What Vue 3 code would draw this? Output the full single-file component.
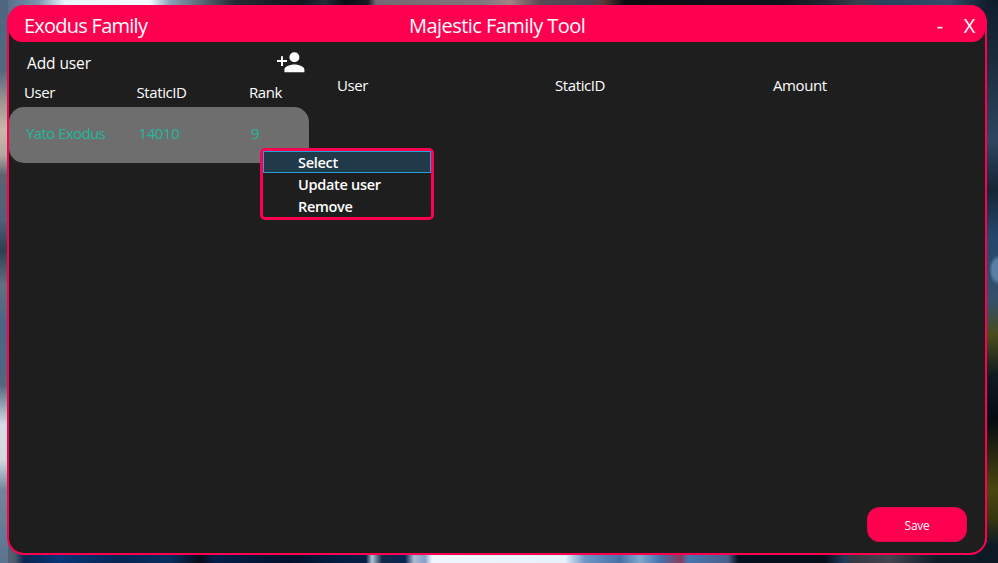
<script setup>
const members = [{ name: 'Yato Exodus', id: '14010', rank: '9' }]
const actions = ['Select', 'Update user', 'Remove']
</script>

<template>
  <div class="desktop">
    <div class="strip top"></div>
    <div class="middle">
      <div class="strip left"></div>
      <main class="window">
        <header class="titlebar">
          <span class="family">Exodus Family</span>
          <h1>Majestic Family Tool</h1>
          <div class="controls"><button class="min">-</button><button class="close">X</button></div>
        </header>
        <div class="content">
          <section class="members">
            <div class="add">
              <span class="addlabel">Add user</span>
              <svg class="addicon" viewBox="0 0 28 21" width="28" height="21">
                <path fill="#fff" d="M17.400 10.200a5 5 0 1 0 0-10a5 5 0 0 0 0 10zM7.400 20.200v-2.600c0-3.400 6.600-5.100 10-5.100s10 1.700 10 5.100v2.600zM4 4.300h2v3.700h4v2H6v3.900H4V10H0V8h4z" />
              </svg>
            </div>
            <div class="cols head"><span>User</span><span>StaticID</span><span>Rank</span></div>
            <div v-for="m in members" :key="m.id" class="cols card">
              <span class="name">{{ m.name }}</span><span>{{ m.id }}</span><span>{{ m.rank }}</span>
            </div>
          </section>
          <section class="amounts">
            <div class="acols"><span>User</span><span>StaticID</span><span>Amount</span></div>
            <button class="save">Save</button>
          </section>
        </div>
      </main>
      <div class="strip right"></div>
    </div>
    <div class="strip bottom"></div>
    <ul class="menu">
      <li v-for="(a, i) in actions" :key="a" :class="{ active: i === 0 }">{{ a }}</li>
    </ul>
  </div>
</template>

<style>
body { overflow: hidden; background: #1b2939; }
</style>

<style scoped>
* { box-sizing: border-box; }
.desktop {
  position: relative; width: 998px; height: 563px; display: flex; flex-direction: column;
  font-family: "Open Sans", "Noto Sans", sans-serif; color: #fff; font-size: 15px; letter-spacing: -.4px;
  background:
    radial-gradient(ellipse 9px 15px at 998px 270px, #5b7ea4 65%, transparent),
    linear-gradient(#101e2c 0, #1a2b3c 60px, #2e465f 140px, #152535 190px, #24466c 235px, #33506b 300px, #4a4b1c 335px, #101b20 375px, #050b10 420px, #4b4610 490px, #35350f 520px, #0c1a25 545px) 987px 0 / 11px 563px no-repeat,
    linear-gradient(#50657f 0, #526780 70px, #9b928f 100px, #cbb7aa 130px, #b5a8a2 155px, #5c6370 175px, #526078 220px, #2e3f52 250px, #627080 285px, #4b6484 325px, #52677f 385px, #d5dde6 425px, #d0d8e0 460px, #72859b 490px, #5a7390 563px) 0 0 / 8px 563px no-repeat,
    linear-gradient(90deg, #50657f 0, #7895ad 38px, #e9f6fc 65px, #f4fcff 150px, #87a2b6 170px, #52616e 205px, #242a33 235px, #12161e 300px, #242d39 325px, #0c0e13 345px, #171b23 368px, #756973 376px, #83757e 485px, #a48282 510px, #594a54 540px, #454654 590px, #5b3a39 603px, #0c0d11 625px, #11131a 780px, #20262f 825px, #37434e 860px, #27445e 885px, #314d69 950px, #101e2c 987px) 0 0 / 998px 20px no-repeat,
    linear-gradient(90deg, #5d6b7b 0, #4b5969 15px, #092653 24px, #083678 60px, #072653 120px, #092f62 170px, #090d17 200px, #04204a 215px, #02122b 290px, #031f42 340px, #071f43 366px, #b1c4d7 372px, #132b48 382px, #082452 405px, #acbbd0 414px, #85a0c9 425px, #f0f6fb 432px, #e7f1fa 565px, #6e96c5 585px, #4772a8 620px, #82a8ce 640px, #4373ae 660px, #873d5c 681px, #4777b0 688px, #4b608d 728px, #06121f 738px, #07101b 825px, #213e5d 845px, #353741 852px, #44454f 890px, #111e29 935px, #0b1922 998px) 0 543px / 998px 20px no-repeat,
    #34485c;
}
.top { height: 5px; flex: none; }
.middle { display: flex; height: 550px; }
.left { width: 7px; flex: none; }
.right { width: 11px; flex: none; }
.window {
  width: 980px; height: 550px; border: 2px solid #ff0051; border-top-width: 0;
  border-radius: 17px; background: linear-gradient(#ff0051 18px, #1e1e1e 18px); overflow: hidden;
  display: flex; flex-direction: column;
}
.titlebar {
  height: 37px; flex: none; background: #ff0051; border-radius: 0 0 13px 13px;
  display: grid; grid-template-columns: 385px auto 1fr; align-items: center;
  padding: 5px 9px 0 15px; font-size: 20px; line-height: 30px;
}
.family { letter-spacing: -.75px; }
h1 { margin: 0; font: inherit; letter-spacing: -.55px; white-space: nowrap; }
.controls { display: flex; justify-content: flex-end; align-items: center; gap: 21px; }
.close { margin-right: 1px; }
button { font: inherit; color: inherit; letter-spacing: inherit; border: 0; background: none; padding: 0; }
.content { display: flex; flex: 1; }
.members { width: 300px; }
.add { display: flex; justify-content: space-between; padding: 10px 4px 0 18px; height: 38px; }
.addlabel { font-size: 15.500px; line-height: 23px; letter-spacing: -.1px; }
.head { height: 27px; padding: 0 0 0 15px; line-height: 25px; }
.cols { display: grid; grid-template-columns: 112.500px 112.500px 1fr; }
.card { height: 56px; padding: 0 0 5px 17px; border-radius: 15px; background: #6e6e6e; color: #22b99a; align-items: center; }
.name { letter-spacing: -.6px; }
.amounts { flex: 1; display: flex; flex-direction: column; justify-content: space-between; padding: 32px 18px 11px 28px; }
.acols { display: grid; grid-template-columns: 218px 218px 1fr; line-height: 22px; }
.save {
  align-self: flex-end; width: 100px; height: 35px; border-radius: 12px; background: #ff0051;
  border: 1px solid #db0b4b; padding-top: 2px; font-size: 12px; letter-spacing: -.3px;
}
.menu {
  position: absolute; left: 260px; top: 148px; width: 174px; height: 72px; margin: 0; padding: 0;
  list-style: none; border: 3px solid #ff0051; border-radius: 5px; background: #1e1e1e;
  font-weight: 600; font-size: 14.500px; letter-spacing: -.3px;
}
.menu li { height: 22px; padding-left: 34px; border: 1px solid transparent; line-height: 21px; }
.menu .active { background: #203a49; border-color: #26a0da; }
</style>
